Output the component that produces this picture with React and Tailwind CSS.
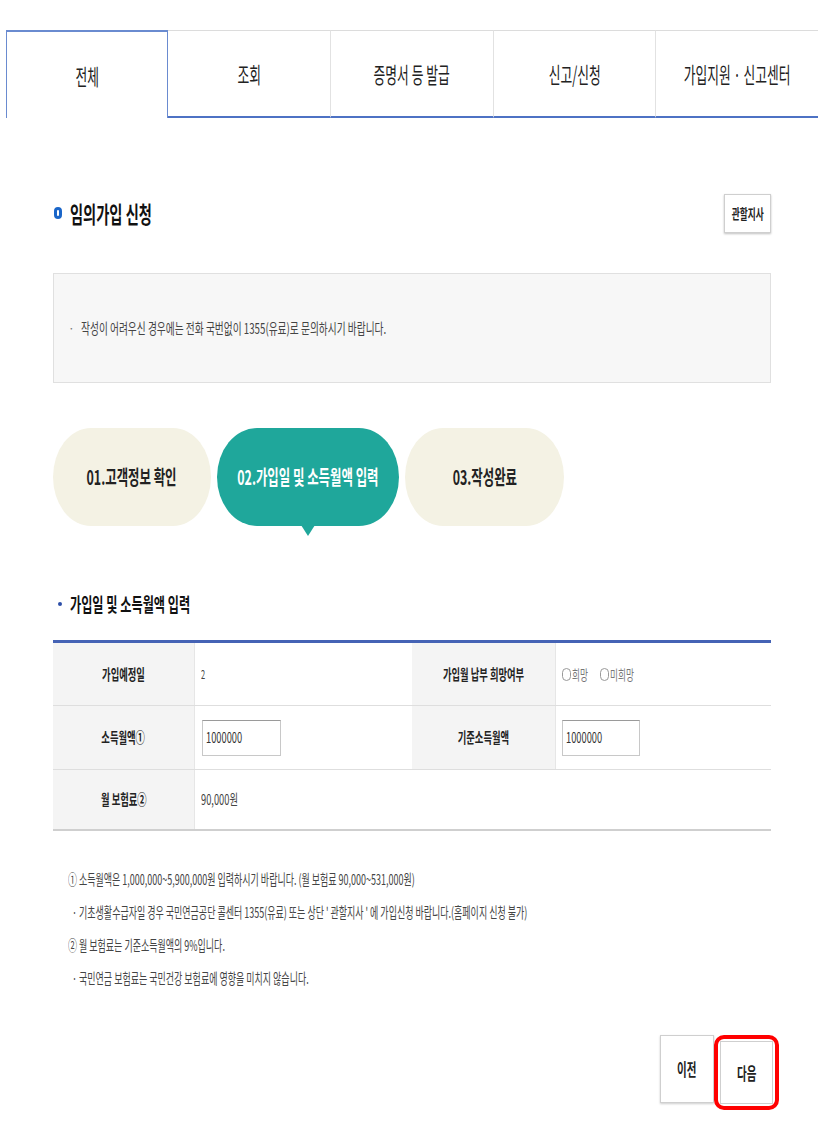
import React from 'react';

const font = { fontFamily: '"Noto Sans CJK KR", "Noto Sans", sans-serif' };

// text in the reference is horizontally condensed
function Sq({ children, center = false, scale = 'scale-x-[0.62]', className = '' }) {
    return (
        <span className={`inline-block whitespace-nowrap ${scale} ${center ? 'origin-center' : 'origin-left'} ${className}`}>
            {children}
        </span>
    );
}

const tabs = ['조회', '증명서 등 발급', '신고/신청', '가입지원 · 신고센터'];

function Radio({ label }) {
    return (
        <span className="inline-flex items-center">
            <span className="inline-block w-[9px] h-[13px] rounded-full border border-[#999] mr-[1px]"></span>
            <span className="inline-block w-[26px] overflow-visible">
                <Sq>{label}</Sq>
            </span>
        </span>
    );
}

export default function App() {
    return (
        <div className="w-[824px] min-h-[1125px] bg-white text-[#222]" style={font}>
            {/* Top tabs */}
            <div className="pt-[30px] px-[6px]">
                <div className="flex h-[88px]">
                    <div className="w-[162px] shrink-0 border-t-2 border-l border-r border-[#6a8bd0] flex items-center justify-center">
                        <Sq center scale="scale-x-[0.58]" className="text-[22px] text-[#222]">전체</Sq>
                    </div>
                    {tabs.map((t, i) => (
                        <div
                            key={t}
                            className={`flex-1 min-w-0 border-t border-t-[#dcdcdc] border-b-2 border-b-[#4d72c4] flex items-center justify-center ${i < tabs.length - 1 ? 'border-r border-r-[#e2e2e2]' : ''}`}
                        >
                            <Sq center scale="scale-x-[0.58]" className="text-[22px] text-[#222]">{t}</Sq>
                        </div>
                    ))}
                </div>
            </div>

            <div className="mx-[53px]">
                {/* Title row */}
                <div className="mt-[75px] flex items-center justify-between">
                    <div className="flex items-center h-[40px]">
                        <span className="inline-block w-[8px] h-[12px] rounded-full border-[3px] border-[#1a66c9] ml-[1px] mr-[8px]"></span>
                        <Sq className="text-[23px] font-bold text-[#111]">임의가입 신청</Sq>
                    </div>
                    <button className="w-[47px] h-[39px] border border-[#cfcfcf] shadow-[0_1px_2px_rgba(0,0,0,0.25)] bg-white flex items-center justify-center">
                        <Sq center className="text-[14px] font-bold text-[#222]">관할지사</Sq>
                    </button>
                </div>

                {/* Info box */}
                <div className="mt-[40px] h-[110px] bg-[#f7f7f7] border border-[#e0e0e0] flex items-center px-[14px]">
                    <span className="text-[12px] text-[#777] mr-[6px]">·</span>
                    <Sq scale="scale-x-[0.67]" className="text-[14.5px] text-[#444]">작성이 어려우신 경우에는 전화 국번없이 1355(유료)로 문의하시기 바랍니다.</Sq>
                </div>

                {/* Steps */}
                <div className="mt-[45px] flex gap-[6px] items-start">
                    <div className="w-[158px] h-[98px] rounded-[38px_/_49px] bg-[#f4f2e4] flex items-center justify-center">
                        <Sq center className="text-[20px] font-bold text-[#222]">01.고객정보 확인</Sq>
                    </div>
                    <div className="relative w-[182px] h-[98px] rounded-[40px_/_49px] bg-[#1fa79b] flex items-center justify-center">
                        <Sq center className="text-[20px] font-bold text-white">02.가입일 및 소득월액 입력</Sq>
                        <svg className="absolute left-[84px] top-[97px]" width="14" height="11" viewBox="0 0 14 11">
                            <polygon points="0,0 14,0 7,11" fill="#1fa79b" />
                        </svg>
                    </div>
                    <div className="w-[159px] h-[98px] rounded-[38px_/_49px] bg-[#f4f2e4] flex items-center justify-center">
                        <Sq center className="text-[20px] font-bold text-[#222]">03.작성완료</Sq>
                    </div>
                </div>

                {/* Section header */}
                <div className="mt-[64px] flex items-center h-[28px]">
                    <span className="inline-block w-[4px] h-[4px] rounded-full bg-[#2d4fa8] ml-[5px] mr-[8px]"></span>
                    <Sq scale="scale-x-[0.64]" className="text-[19px] font-bold text-[#111]">가입일 및 소득월액 입력</Sq>
                </div>

                {/* Table */}
                <div className="mt-[22px] border-t-[3px] border-[#4563b5]">
                    <div className="grid grid-cols-[142px_217px_144px_1fr] h-[63px] border-b border-[#dedede]">
                        <div className="bg-[#f4f4f4] border-r border-[#e6e6e6] flex items-center justify-center">
                            <Sq center className="text-[15px] font-bold text-[#222]">가입예정일</Sq>
                        </div>
                        <div className="flex items-center pl-[6px] overflow-hidden">
                            <Sq className="text-[12px] text-[#444]">2</Sq>
                        </div>
                        <div className="bg-[#f4f4f4] border-r border-[#e6e6e6] flex items-center justify-center">
                            <Sq center className="text-[15px] font-bold text-[#222]">가입월 납부 희망여부</Sq>
                        </div>
                        <div className="flex items-center pl-[6px] gap-[2px] text-[14px] text-[#777]">
                            <Radio label="희망" />
                            <Radio label="미희망" />
                        </div>
                    </div>
                    <div className="grid grid-cols-[142px_217px_144px_1fr] h-[64px] border-b border-[#dedede]">
                        <div className="bg-[#f4f4f4] border-r border-[#e6e6e6] flex items-center justify-center">
                            <Sq center className="text-[15px] font-bold text-[#222]">소득월액①</Sq>
                        </div>
                        <div className="flex items-center pl-[7px]">
                            <div className="w-[79px] h-[36px] border border-[#c8c8c8] border-t-[#9a9a9a] flex items-center pl-[3px] overflow-hidden">
                                <Sq className="text-[15px] text-[#333]">1000000</Sq>
                            </div>
                        </div>
                        <div className="bg-[#f4f4f4] border-r border-[#e6e6e6] flex items-center justify-center">
                            <Sq center className="text-[15px] font-bold text-[#222]">기준소득월액</Sq>
                        </div>
                        <div className="flex items-center pl-[6px]">
                            <div className="w-[78px] h-[36px] border border-[#c8c8c8] border-t-[#9a9a9a] flex items-center pl-[3px] overflow-hidden">
                                <Sq className="text-[15px] text-[#333]">1000000</Sq>
                            </div>
                        </div>
                    </div>
                    <div className="grid grid-cols-[142px_1fr] h-[61px] border-b-2 border-[#cfcfcf]">
                        <div className="bg-[#f4f4f4] border-r border-[#e6e6e6] flex items-center justify-center">
                            <Sq center className="text-[15px] font-bold text-[#222]">월 보험료②</Sq>
                        </div>
                        <div className="flex items-center pl-[6px]">
                            <Sq className="text-[15px] text-[#444]">90,000원</Sq>
                        </div>
                    </div>
                </div>

                {/* Notes */}
                <div className="mt-[36px] pl-[15px] text-[14.5px] text-[#444] flex flex-col gap-[9px]">
                    <div className="h-[24px] flex items-center">
                        <Sq>① 소득월액은 1,000,000~5,900,000원 입력하시기 바랍니다. (월 보험료 90,000~531,000원)</Sq>
                    </div>
                    <div className="h-[24px] flex items-center pl-[4px]">
                        <Sq>· 기초생활수급자일 경우 국민연금공단 콜센터 1355(유료) 또는 상단 ' 관할지사 ' 에 가입신청 바랍니다.(홈페이지 신청 불가)</Sq>
                    </div>
                    <div className="h-[24px] flex items-center">
                        <Sq>② 월 보험료는 기준소득월액의 9%입니다.</Sq>
                    </div>
                    <div className="h-[24px] flex items-center pl-[4px]">
                        <Sq>· 국민연금 보험료는 국민건강 보험료에 영향을 미치지 않습니다.</Sq>
                    </div>
                </div>

                {/* Buttons */}
                <div className="mt-[45px] flex justify-end gap-[6px]">
                    <button className="w-[54px] h-[68px] border border-[#cfcfcf] shadow-[0_1px_2px_rgba(0,0,0,0.2)] bg-white flex items-center justify-center">
                        <Sq center className="text-[17px] font-bold text-[#222]">이전</Sq>
                    </button>
                    <div className="relative mr-[-2px]">
                        <button className="mt-[6px] w-[53px] h-[63px] border border-[#cfcfcf] bg-white flex items-center justify-center">
                            <Sq center className="text-[17px] font-bold text-[#222]">다음</Sq>
                        </button>
                        <div className="absolute left-[-6px] top-0 w-[65px] h-[75px] border-[4px] border-[#ff0000] rounded-[10px] pointer-events-none"></div>
                    </div>
                </div>
            </div>
        </div>
    );
}
